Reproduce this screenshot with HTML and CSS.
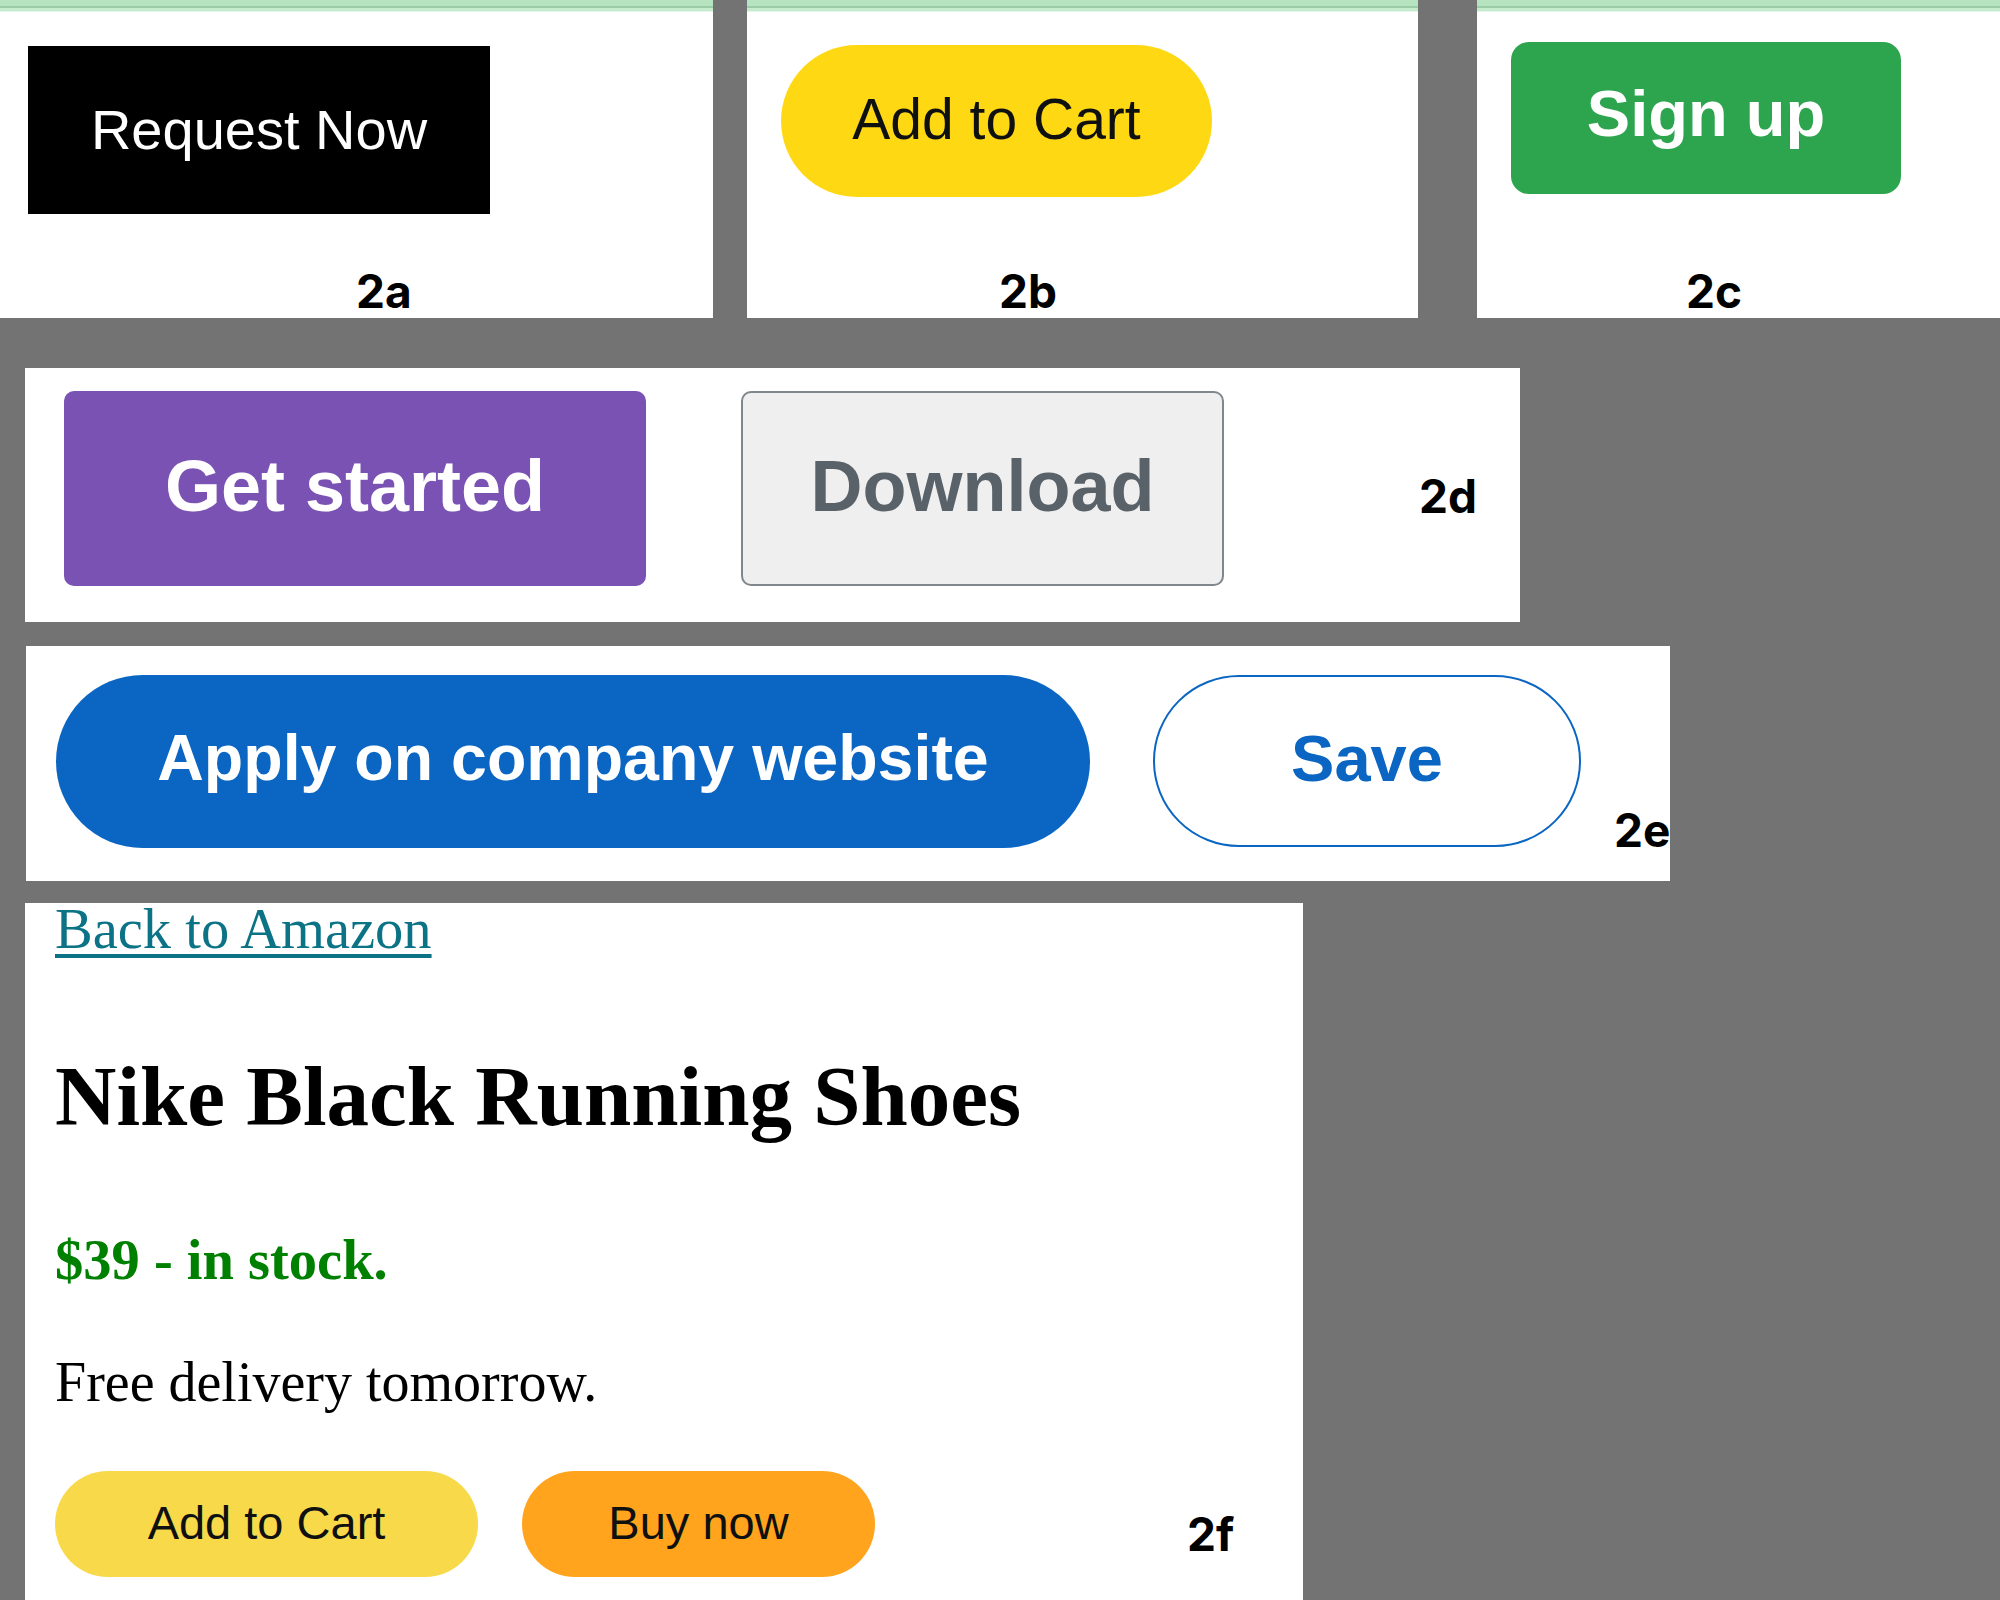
FILE: index.html
```html
<!DOCTYPE html>
<html lang="en">
<head>
<meta charset="utf-8">
<title>Buttons</title>
<link rel="stylesheet" href="styles.css">
</head>
<body>
<div class="page">
  <div class="row-top">
    <section class="tile tile-a">
      <button class="btn btn-request">Request Now</button>
      <span class="label label-a">2a</span>
    </section>
    <section class="tile tile-b">
      <button class="btn btn-cart">Add to Cart</button>
      <span class="label label-b">2b</span>
    </section>
    <section class="tile tile-c">
      <button class="btn btn-signup">Sign up</button>
      <span class="label label-c">2c</span>
    </section>
  </div>

  <section class="panel panel-d">
    <button class="btn btn-start">Get started</button>
    <button class="btn btn-download">Download</button>
    <span class="label label-d">2d</span>
  </section>

  <section class="panel panel-e">
    <button class="btn btn-apply">Apply on company website</button>
    <button class="btn btn-save">Save</button>
    <span class="label label-e">2e</span>
  </section>

  <section class="panel-f">
    <a class="back-link" href="#">Back to Amazon</a>
    <h1 class="product-title">Nike Black Running Shoes</h1>
    <p class="price">$39 - in stock.</p>
    <p class="delivery">Free delivery tomorrow.</p>
    <div class="buy-row">
      <button class="btn btn-add">Add to Cart</button>
      <button class="btn btn-buy">Buy now</button>
      <span class="label label-f">2f</span>
    </div>
  </section>
</div>
</body>
</html>
```

FILE: styles.css
```css
html, body {
  margin: 0;
  padding: 0;
}
body {
  background: #737373;
  width: 2000px;
  height: 1600px;
  overflow: hidden;
}
.page {
  display: flex;
  flex-direction: column;
  align-items: flex-start;
}

/* generic button */
.btn {
  display: flex;
  align-items: center;
  justify-content: center;
  border: none;
  padding: 0;
  margin: 0;
  font-family: "Liberation Sans", Arial, sans-serif;
  line-height: 1;
  cursor: pointer;
  flex: none;
  box-sizing: border-box;
}

.label {
  font-family: Inter, "Liberation Sans", sans-serif;
  font-weight: 700;
  font-size: 46px;
  line-height: 46px;
  color: #000;
  flex: none;
  white-space: nowrap;
}

/* top row */
.row-top {
  display: flex;
  height: 318px;
}
.tile {
  background: #fff;
  height: 318px;
  display: flex;
  flex-direction: column;
  align-items: flex-start;
  box-sizing: border-box;
  padding-top: 12px;
  position: relative;
}
.tile::before {
  content: "";
  position: absolute;
  left: 0;
  right: 0;
  top: 0;
  height: 12px;
  background: linear-gradient(#b6e4c0 0 6px, #9acca6 6px 8px, #c4ebcc 8px 11px, #e8f7eb 11px 12px);
}
.tile .label {
  margin-top: auto;
  margin-bottom: 4px;
}
.tile-a {
  width: 713px;
}
.tile-b {
  width: 671px;
  margin-left: 34px;
}
.tile-c {
  width: 523px;
  margin-left: 59px;
}

.btn-request {
  margin: 34px 0 0 28px;
  width: 462px;
  height: 168px;
  background: #000;
  color: #fff;
  font-size: 56px;
}
.label-a { margin-left: 356px; }

.btn-cart {
  margin: 33px 0 0 34px;
  width: 431px;
  height: 152px;
  border-radius: 76px;
  background: #ffd814;
  color: #0f1111;
  font-size: 57px;
  padding-bottom: 3px;
}
.label-b { margin-left: 252px; }

.btn-signup {
  margin: 30px 0 0 34px;
  width: 390px;
  height: 152px;
  border-radius: 18px;
  background: #2da44e;
  color: #fff;
  font-size: 65px;
  font-weight: 700;
  padding-bottom: 10px;
}
.label-c { margin-left: 209px; }

/* 2d / 2e panels */
.panel {
  background: #fff;
  display: flex;
  align-items: flex-start;
  box-sizing: border-box;
  overflow: hidden;
}
.panel-d {
  margin: 50px 0 0 25px;
  width: 1495px;
  height: 254px;
  padding: 23px 0 0 39px;
}
.btn-start {
  width: 582px;
  height: 195px;
  border-radius: 10px;
  background: #7952b3;
  color: #fff;
  font-size: 72px;
  font-weight: 700;
  padding-bottom: 6px;
}
.btn-download {
  margin-left: 95px;
  width: 483px;
  height: 195px;
  border-radius: 10px;
  background: #efefef;
  border: 2px solid #7f878c;
  color: #5a6269;
  font-size: 72px;
  font-weight: 700;
  padding-bottom: 6px;
}
.label-d {
  margin: 82px 0 0 195px;
}

.panel-e {
  margin: 24px 0 0 26px;
  width: 1644px;
  height: 235px;
  padding: 29px 0 0 30px;
}
.btn-apply {
  width: 1034px;
  height: 173px;
  border-radius: 87px;
  background: #0a66c2;
  color: #fff;
  font-size: 64.5px;
  font-weight: 700;
  padding-bottom: 6px;
}
.btn-save {
  margin-left: 63px;
  width: 428px;
  height: 172px;
  border-radius: 86px;
  background: #fff;
  border: 2px solid #0a66c2;
  color: #0a66c2;
  font-size: 65px;
  font-weight: 700;
  padding-bottom: 6px;
}
.label-e {
  margin: 132px 0 0 33px;
}

/* 2f product panel */
.panel-f {
  margin: 22px 0 0 25px;
  width: 1278px;
  height: 697px;
  background: #fff;
  box-sizing: border-box;
  padding-left: 30px;
  display: flex;
  flex-direction: column;
  align-items: flex-start;
  font-family: "Liberation Serif", "Times New Roman", serif;
  color: #000;
}
.back-link {
  margin-top: -2px;
  font-size: 56.5px;
  line-height: 56px;
  color: #0c7386;
  text-decoration: underline;
  text-decoration-thickness: 4px;
  text-underline-offset: 6px;
}
.product-title {
  margin: 97px 0 0 0;
  font-size: 85px;
  line-height: 85px;
  font-weight: 700;
}
.price {
  margin: 93px 0 0 0;
  font-size: 56.5px;
  line-height: 56px;
  font-weight: 700;
  color: #008000;
}
.delivery {
  margin: 66px 0 0 0;
  font-size: 56px;
  line-height: 56px;
}
.buy-row {
  margin-top: 61px;
  display: flex;
  align-items: flex-start;
}
.btn-add {
  width: 423px;
  height: 106px;
  border-radius: 53px;
  background: #f8d94a;
  color: #0f1111;
  font-size: 47px;
  padding-bottom: 4px;
}
.btn-buy {
  margin-left: 44px;
  width: 353px;
  height: 106px;
  border-radius: 53px;
  background: #ffa41c;
  color: #0f1111;
  font-size: 47px;
  padding-bottom: 4px;
}
.label-f {
  margin: 40px 0 0 312px;
}
```
